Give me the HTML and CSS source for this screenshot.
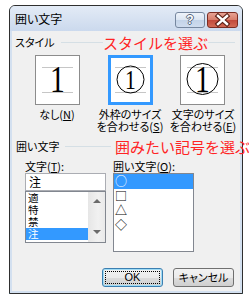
FILE: index.html
```html
<!DOCTYPE html>
<html lang="ja">
<head>
<meta charset="utf-8">
<link rel="stylesheet" href="styles.css">
</head>
<body>
<div class="window">
  <div class="titlebar">
    <span class="title">囲い文字</span>
    <div class="tb-buttons">
      <span class="tb-btn help">?</span>
      <span class="tb-btn close">
        <svg width="29" height="14" viewBox="0 0 29 14">
          <path d="M10 3 L19 11 M19 3 L10 11" stroke="#5b1e14" stroke-width="4.6" stroke-linecap="square"/>
          <path d="M10 3 L19 11 M19 3 L10 11" stroke="#ffffff" stroke-width="2.4" stroke-linecap="square"/>
        </svg>
      </span>
    </div>
  </div>
  <div class="content">
    <div class="group-head"><span>スタイル</span><i class="rule"></i></div>
    <div class="styles">
      <div class="opt">
        <div class="box">
          <svg width="43" height="48" viewBox="0 0 43 48">
            <line x1="6" y1="11.5" x2="37" y2="11.5" stroke="#c6c6c6"/>
            <line x1="6" y1="36.5" x2="37" y2="36.5" stroke="#c6c6c6"/>
            <text transform="translate(21.5 36) scale(0.78 1)" font-size="38" text-anchor="middle" font-family="Liberation Serif, serif">1</text>
          </svg>
        </div>
        <div class="cap">なし(<u>N</u>)</div>
      </div>
      <div class="opt">
        <div class="box sel">
          <svg width="43" height="48" viewBox="0 0 43 48">
            <line x1="6" y1="11.5" x2="37" y2="11.5" stroke="#c6c6c6"/>
            <line x1="6" y1="36.5" x2="37" y2="36.5" stroke="#c6c6c6"/>
            <circle cx="21.5" cy="23.5" r="13.5" fill="none" stroke="#000"/>
            <text transform="translate(21.5 32.5) scale(0.8 1)" font-size="27" text-anchor="middle" font-family="Liberation Serif, serif">1</text>
          </svg>
        </div>
        <div class="cap">外枠のサイズ<br>を合わせる(<u>S</u>)</div>
      </div>
      <div class="opt">
        <div class="box">
          <svg width="43" height="48" viewBox="0 0 43 48">
            <line x1="6" y1="11.5" x2="37" y2="11.5" stroke="#c6c6c6"/>
            <line x1="6" y1="36.5" x2="37" y2="36.5" stroke="#c6c6c6"/>
            <circle cx="21.5" cy="23" r="15.5" fill="none" stroke="#000"/>
            <text transform="translate(21.5 36) scale(0.78 1)" font-size="38" text-anchor="middle" font-family="Liberation Serif, serif">1</text>
          </svg>
        </div>
        <div class="cap">文字のサイズ<br>を合わせる(<u>E</u>)</div>
      </div>
    </div>
    <div class="group-head g2"><span>囲い文字</span><i class="rule short"></i></div>
    <div class="fields">
      <div class="col">
        <div class="lbl">文字(<u>T</u>):</div>
        <div class="input">注</div>
        <div class="list l1">
          <div class="items">
            <div class="row">適</div>
            <div class="row">特</div>
            <div class="row">禁</div>
            <div class="row sel">注</div>
          </div>
          <div class="sbar"><i class="arr up"></i><i class="arr down"></i></div>
        </div>
      </div>
      <div class="col">
        <div class="lbl">囲い文字(<u>O</u>):</div>
        <div class="list l2">
          <div class="row sel">○</div>
          <div class="row">□</div>
          <div class="row">△</div>
          <div class="row">◇</div>
        </div>
      </div>
    </div>
    <div class="buttons">
      <button class="btn default"><span class="focus">OK</span></button>
      <button class="btn">キャンセル</button>
    </div>
  </div>
  <div class="note n1">スタイルを選ぶ</div>
  <div class="note n2">囲みたい記号を選ぶ</div>
</div>
</body>
</html>
```

FILE: styles.css
```css
* { box-sizing: border-box; }
html, body { margin: 0; background: #ffffff; }
body {
  padding: 5px 0 0 9px;
  font-family: "Noto Sans CJK JP", "Noto Sans", sans-serif;
  font-size: 11px;
  color: #000;
  font-feature-settings: "palt";
}
.window {
  position: relative;
  width: 234px;
  height: 289px;
  border: 1px solid #2f2f2f;
  border-radius: 6px 6px 0 0;
  background: #d3e0f0;
  display: flex;
  flex-direction: column;
  box-shadow: 0 1px 0 #48c4e6;
}
.titlebar {
  height: 25px;
  flex: none;
  display: flex;
  align-items: center;
  padding-left: 5px;
  background: linear-gradient(#e3ebf6, #cbd9ed);
  border-radius: 5px 5px 0 0;
}
.title { font-size: 12px; line-height: 14px; flex: 1; }
.tb-buttons {
  display: flex;
  gap: 2px;
  align-self: flex-start;
  margin-top: 6px;
  margin-right: 4px;
}
.tb-btn {
  height: 16px;
  border-radius: 3px;
  display: flex;
  align-items: center;
  justify-content: center;
}
.help {
  width: 30px;
  border: 1px solid #76879f;
  background: linear-gradient(#eef3fa 0%, #dbe5f2 50%, #c3d3e8 51%, #cfdcee 100%);
  color: #fff;
  font-family: "Liberation Sans", sans-serif;
  font-weight: bold;
  font-size: 12px;
  line-height: 14px;
  text-shadow: 1px 0 0 #56657b, -1px 0 0 #56657b, 0 1px 0 #56657b, 0 -1px 0 #56657b;
}
.close {
  width: 31px;
  border: 1px solid #7b2c22;
  background: linear-gradient(#e7a293 0%, #d77c6a 50%, #c1483a 51%, #d26a55 100%);
}
.content {
  flex: 1;
  margin: 0 2px 2px;
  background: #f0f0f0;
  padding-top: 4px;
  position: relative;
}
.group-head {
  display: flex;
  align-items: center;
  height: 14px;
  line-height: 14px;
  padding-left: 3px;
  padding-right: 5px;
}
.group-head .rule {
  flex: 1;
  height: 1px;
  background: #d5dfe5;
  margin-left: 6px;
}
.group-head .rule.short { flex: none; width: 46px; }
.g2 { margin-top: 7px; padding-left: 4px; }
.styles {
  margin-top: 6px;
  margin-left: 8px;
  display: grid;
  grid-template-columns: 74px 72px 74px;
  justify-items: center;
  align-items: start;
}
.opt { display: flex; flex-direction: column; align-items: center; }
.box {
  width: 45px;
  height: 50px;
  border: 1px solid #8c8c8c;
  background: #fff;
}
.box svg { display: block; }
.box.sel {
  border-color: #3399ff;
  box-shadow: inset 0 0 0 2px #3399ff;
}
.cap {
  margin-top: 3px;
  line-height: 12px;
  text-align: center;
  white-space: nowrap;
}
u { text-decoration: underline; text-underline-offset: 1px; }
.fields {
  margin-top: 6px;
  padding-left: 13px;
  display: flex;
  gap: 7px;
}
.col { width: 81px; display: flex; flex-direction: column; }
.lbl { height: 14px; line-height: 14px; }
.input {
  height: 18px;
  border: 1px solid #abadb3;
  background: #fff;
  padding-left: 3px;
  font-size: 12px;
  line-height: 16px;
}
.list {
  border: 1px solid #828790;
  background: #fff;
  font-size: 12px;
}
.l1 { height: 52px; display: flex; font-size: 10.5px; }
.l1 .items { flex: 1; }
.l1 .row { height: 12px; line-height: 12px; padding-left: 2px; }
.sbar {
  width: 17px;
  background: linear-gradient(to right, #e6e6e6, #f1f1f1 60%, #e9e9e9);
  position: relative;
  display: flex;
  flex-direction: column;
  align-items: center;
  justify-content: space-between;
  padding: 7px 0 8px;
}
.arr { width: 0; height: 0; border-left: 4px solid transparent; border-right: 4px solid transparent; }
.arr.up { border-bottom: 4px solid #6b6b6b; }
.arr.down { border-top: 4px solid #6b6b6b; }
.l2 { height: 79px; padding-top: 0; }
.l2 .row { height: 14.5px; line-height: 14.5px; padding-left: 1px; }
.row.sel { background: #3399ff; color: #fff; }
.buttons {
  margin-top: 16px;
  display: flex;
  justify-content: flex-end;
  gap: 10px;
  padding-right: 6px;
}
.btn {
  width: 61px;
  height: 19px;
  margin: 0;
  padding: 0;
  border: 1px solid #707070;
  border-radius: 3px;
  background: linear-gradient(#f2f2f2 0%, #ebebeb 50%, #dddddd 51%, #cfcfcf 100%);
  font-family: "Noto Sans CJK JP", "Noto Sans", sans-serif;
  font-feature-settings: "palt";
  font-size: 11px;
  line-height: 15px;
  color: #000;
  display: flex;
  align-items: center;
  justify-content: center;
}
.btn.default {
  border-color: #3c7fb1;
  box-shadow: inset 0 0 0 1px #9fdcf6;
  padding: 2px;
}
.focus {
  flex: 1;
  align-self: stretch;
  border: 1px dotted #000;
  display: flex;
  align-items: center;
  justify-content: center;
  font-family: "Liberation Sans", sans-serif;
}
.note {
  position: absolute;
  color: #ff2424;
  font-size: 15px;
  line-height: 15px;
  white-space: nowrap;
  font-feature-settings: normal;
}
.n1 { left: 93px; top: 29px; background: #f0f0f0; }
.n2 { left: 105px; top: 133px; }
```
